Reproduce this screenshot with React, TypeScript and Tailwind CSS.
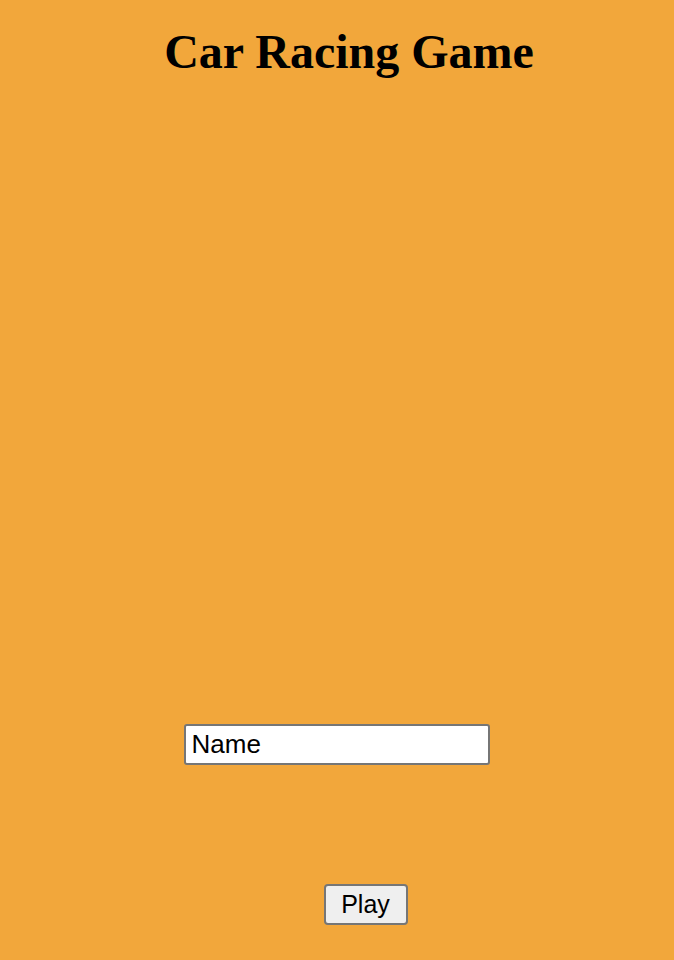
import React from "react";

export default function App() {
  return (
    <div className="w-[674px] h-[960px] bg-[#f2a73b] flex flex-col overflow-hidden">
      <h1
        className="mt-[25px] ml-[24px] text-center text-[48px] leading-[53px] font-bold text-black"
        style={{ fontFamily: '"Liberation Serif", "Times New Roman", serif' }}
      >
        Car Racing Game
      </h1>
      <div className="h-[646px]" />
      <div className="flex justify-center pr-[1px]">
        <input
          defaultValue="Name"
          className="w-[306px] h-[41px] border-2 border-[#767676] rounded-[3px] bg-white pl-[6px] text-[26px] text-black outline-none"
          style={{ fontFamily: '"Liberation Sans", Arial, sans-serif' }}
        />
      </div>
      <div className="h-[119px]" />
      <div className="flex justify-center pl-[57px]">
        <button
          className="w-[84px] h-[41px] border-2 border-[#767676] rounded-[4px] bg-[#efefef] text-[25px] text-black"
          style={{ fontFamily: '"Liberation Sans", Arial, sans-serif' }}
        >
          Play
        </button>
      </div>
    </div>
  );
}
